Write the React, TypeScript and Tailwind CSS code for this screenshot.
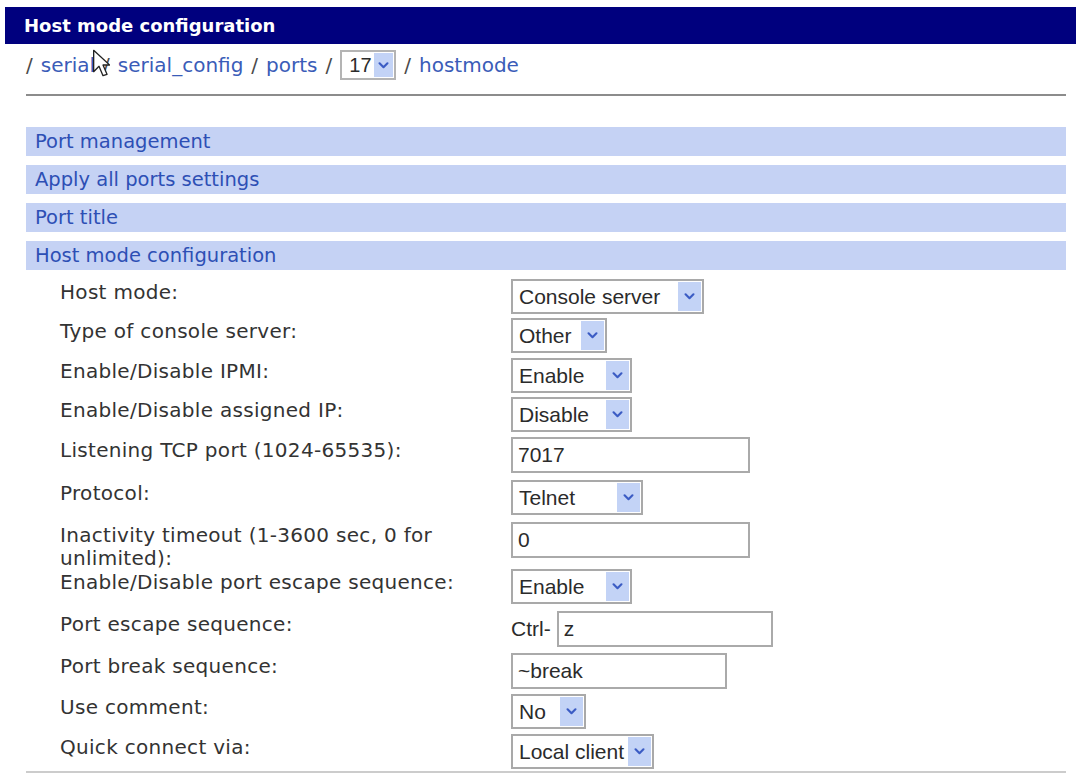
import type { ReactNode } from "react";

function Chevron() {
  return (
    <svg width="11" height="7" viewBox="0 0 12 8" fill="none">
      <path d="M1.5 1.5 L6 6 L10.5 1.5" stroke="#3b5cc4" strokeWidth="2.4" strokeLinecap="round" strokeLinejoin="round" />
    </svg>
  );
}

function Select({ value, width }: { value: string; width: string }) {
  return (
    <div className={`flex h-[35px] ${width} items-stretch border-2 border-[#a9a9a9] bg-white font-['Liberation_Sans',Arial,sans-serif]`}>
      <span className="flex flex-1 items-center pl-[6px] text-[21px] text-[#2b2b2b]">{value}</span>
      <span className="m-[1px] flex w-[23px] items-center justify-center bg-[#c3d3f6]">
        <Chevron />
      </span>
    </div>
  );
}

function Field({ value, width }: { value: string; width: string }) {
  return (
    <input
      readOnly
      defaultValue={value}
      className={`h-[36px] ${width} border-2 border-[#aaaaaa] bg-white pl-[5px] font-['Liberation_Sans',Arial,sans-serif] text-[21px] text-[#2b2b2b] outline-none`}
    />
  );
}

const sections = ["Port management", "Apply all ports settings", "Port title", "Host mode configuration"];

const rows: { label: string; h: string; field: ReactNode }[] = [
  { label: "Host mode:", h: "h-[39px]", field: <Select value="Console server" width="w-[193px]" /> },
  { label: "Type of console server:", h: "h-[40px]", field: <Select value="Other" width="w-[96px]" /> },
  { label: "Enable/Disable IPMI:", h: "h-[39px]", field: <Select value="Enable" width="w-[121px]" /> },
  { label: "Enable/Disable assigned IP:", h: "h-[40px]", field: <Select value="Disable" width="w-[121px]" /> },
  { label: "Listening TCP port (1024-65535):", h: "h-[43px]", field: <Field value="7017" width="w-[239px]" /> },
  { label: "Protocol:", h: "h-[42px]", field: <Select value="Telnet" width="w-[132px]" /> },
  { label: "Inactivity timeout (1-3600 sec, 0 for unlimited):", h: "h-[47px]", field: <Field value="0" width="w-[239px]" /> },
  { label: "Enable/Disable port escape sequence:", h: "h-[42px]", field: <Select value="Enable" width="w-[121px]" /> },
  {
    label: "Port escape sequence:",
    h: "h-[42px]",
    field: (
      <div className="flex items-center gap-[6px] font-['Liberation_Sans',Arial,sans-serif] text-[21px] text-[#2b2b2b]">
        Ctrl-
        <Field value="z" width="w-[216px]" />
      </div>
    ),
  },
  { label: "Port break sequence:", h: "h-[41px]", field: <Field value="~break" width="w-[216px]" /> },
  { label: "Use comment:", h: "h-[40px]", field: <Select value="No" width="w-[75px]" /> },
  { label: "Quick connect via:", h: "h-[37px]", field: <Select value="Local client" width="w-[143px]" /> },
];

export default function App() {
  return (
    <div className="relative h-[776px] w-[1076px] overflow-hidden bg-white pl-[5px] pt-[7px] font-['DejaVu_Sans',sans-serif]">
      <div className="flex h-[37px] items-center bg-[#00007e] pl-[19px] text-[18px] font-bold text-white">
        Host mode configuration
      </div>

      <div className="ml-[21px] mr-[10px]">
        {/* breadcrumb */}
        <nav className="mt-[6px] flex h-[30px] items-center gap-[8px] text-[20px] text-[#3a5cb8]">
          <span className="text-[#4a4a4a]">/</span>
          <a href="#">serial</a>
          <span className="text-[#4a4a4a]">/</span>
          <a href="#">serial_config</a>
          <span className="text-[#4a4a4a]">/</span>
          <a href="#">ports</a>
          <span className="text-[#4a4a4a]">/</span>
          <div className="flex h-[30px] w-[56px] items-stretch border-2 border-[#b4b4b4] font-['Liberation_Sans',Arial,sans-serif]">
            <span className="flex flex-1 items-center pl-[7px] text-[20px] text-[#2b2b2b]">17</span>
            <span className="m-[1px] flex w-[19px] items-center justify-center bg-[#c3d3f6]">
              <Chevron />
            </span>
          </div>
          <span className="text-[#4a4a4a]">/</span>
          <a href="#">hostmode</a>
        </nav>
        <div className="mt-[14px] h-[2px] bg-[#8c8c8c]" />

        {/* section bars */}
        <div className="mt-[31px] flex flex-col gap-[9px]">
          {sections.map((s) => (
            <div key={s} className="flex h-[29px] items-center bg-[#c5d2f4] pl-[9px] text-[19.5px] text-[#2d4fb5]">
              {s}
            </div>
          ))}
        </div>

        {/* host mode form */}
        <div className="mt-[9px] pl-[34px]">
          {rows.map((r) => (
            <div key={r.label} className={`flex items-start ${r.h}`}>
              <div className="w-[451px] pr-[20px] pt-[2px] text-[20px] leading-[23px] tracking-[0.3px] text-[#333333]">
                {r.label}
              </div>
              {r.field}
            </div>
          ))}
        </div>
        <div className="h-[2px] bg-[#cccccc]" />
      </div>

      {/* mouse pointer */}
      <svg className="absolute left-[92px] top-[49px]" width="18" height="28" viewBox="0 0 13 21">
        <path d="M1 1 L1 17 L5 13 L8 20 L11 19 L8 12 L13 12 Z" fill="white" stroke="#222" strokeWidth="1" strokeLinejoin="round" />
      </svg>
    </div>
  );
}
